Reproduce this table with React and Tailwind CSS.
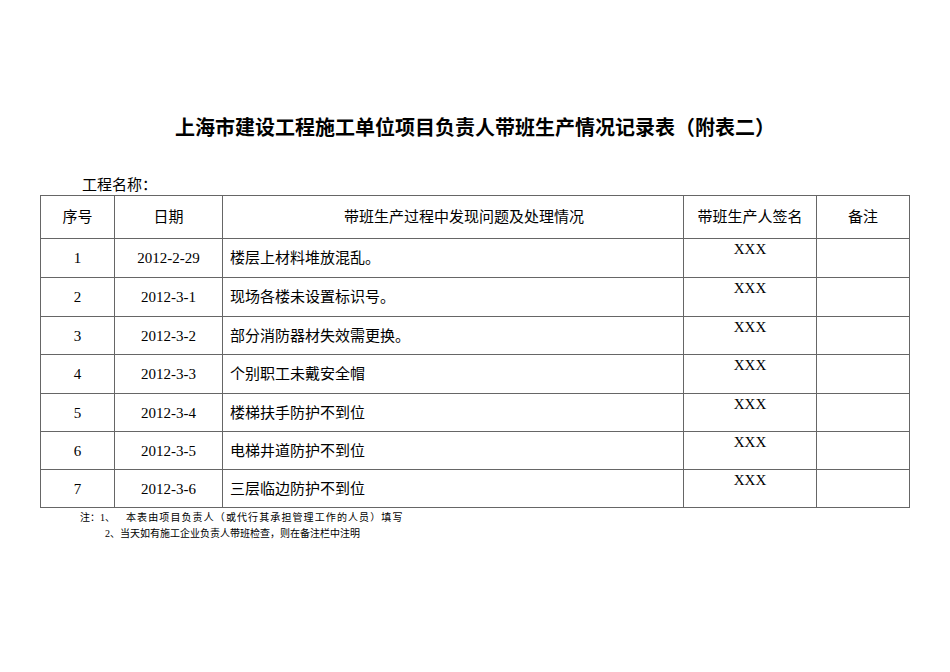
import React from "react";

const rows = [
  ["1", "2012-2-29", "楼层上材料堆放混乱。", 39],
  ["2", "2012-3-1", "现场各楼未设置标识号。", 39],
  ["3", "2012-3-2", "部分消防器材失效需更换。", 38],
  ["4", "2012-3-3", "个别职工未戴安全帽", 39],
  ["5", "2012-3-4", "楼梯扶手防护不到位", 38],
  ["6", "2012-3-5", "电梯井道防护不到位", 38],
  ["7", "2012-3-6", "三层临边防护不到位", 38],
];

const serif = { fontFamily: '"Liberation Serif", "Noto Sans CJK SC", serif' };

export default function App() {
  return (
    <div className="w-[950px] h-[672px] bg-white text-black overflow-hidden" style={serif}>
      <div className="pt-[113px]">
        <h1
          className="text-center text-[20px] leading-[28px] font-bold"
          style={{ fontFamily: '"Noto Sans CJK SC", sans-serif' }}
        >
          上海市建设工程施工单位项目负责人带班生产情况记录表（附表二）
        </h1>
        <div className="mt-[35px] pl-[82px] text-[15px] leading-[19px]">工程名称：</div>
        <table className="ml-[40px] w-[869px] border-collapse table-fixed text-[15px] leading-[18px]">
          <colgroup>
            <col className="w-[74px]" />
            <col className="w-[108px]" />
            <col className="w-[461px]" />
            <col className="w-[133px]" />
            <col className="w-[93px]" />
          </colgroup>
          <thead>
            <tr className="h-[43px]">
              <th className="border border-[#666] font-normal text-center align-middle">序号</th>
              <th className="border border-[#666] font-normal text-center align-middle">日期</th>
              <th className="border border-[#666] font-normal text-center align-middle pl-[22px]">
                带班生产过程中发现问题及处理情况
              </th>
              <th className="border border-[#666] font-normal text-center align-middle px-0 whitespace-nowrap">
                带班生产人签名
              </th>
              <th className="border border-[#666] font-normal text-center align-middle">备注</th>
            </tr>
          </thead>
          <tbody>
            {rows.map(([n, d, t, h]) => (
              <tr key={n} style={{ height: h }}>
                <td className="border border-[#666] text-center align-middle">{n}</td>
                <td className="border border-[#666] text-center align-middle">{d}</td>
                <td className="border border-[#666] text-left align-middle pl-[7px]">{t}</td>
                <td className="border border-[#666] text-center align-top pt-[1px]">XXX</td>
                <td className="border border-[#666]"></td>
              </tr>
            ))}
          </tbody>
        </table>
        <div className="pt-[2px] text-[10px] leading-[16px]">
          <div className="pl-[80px] whitespace-pre flex">
            <span>注：1、</span>
            <span className="ml-[11px] tracking-[1.1px]">本表由项目负责人（或代行其承担管理工作的人员）填写</span>
          </div>
          <div className="pl-[105px] whitespace-pre">2、当天如有施工企业负责人带班检查，则在备注栏中注明</div>
        </div>
      </div>
    </div>
  );
}
